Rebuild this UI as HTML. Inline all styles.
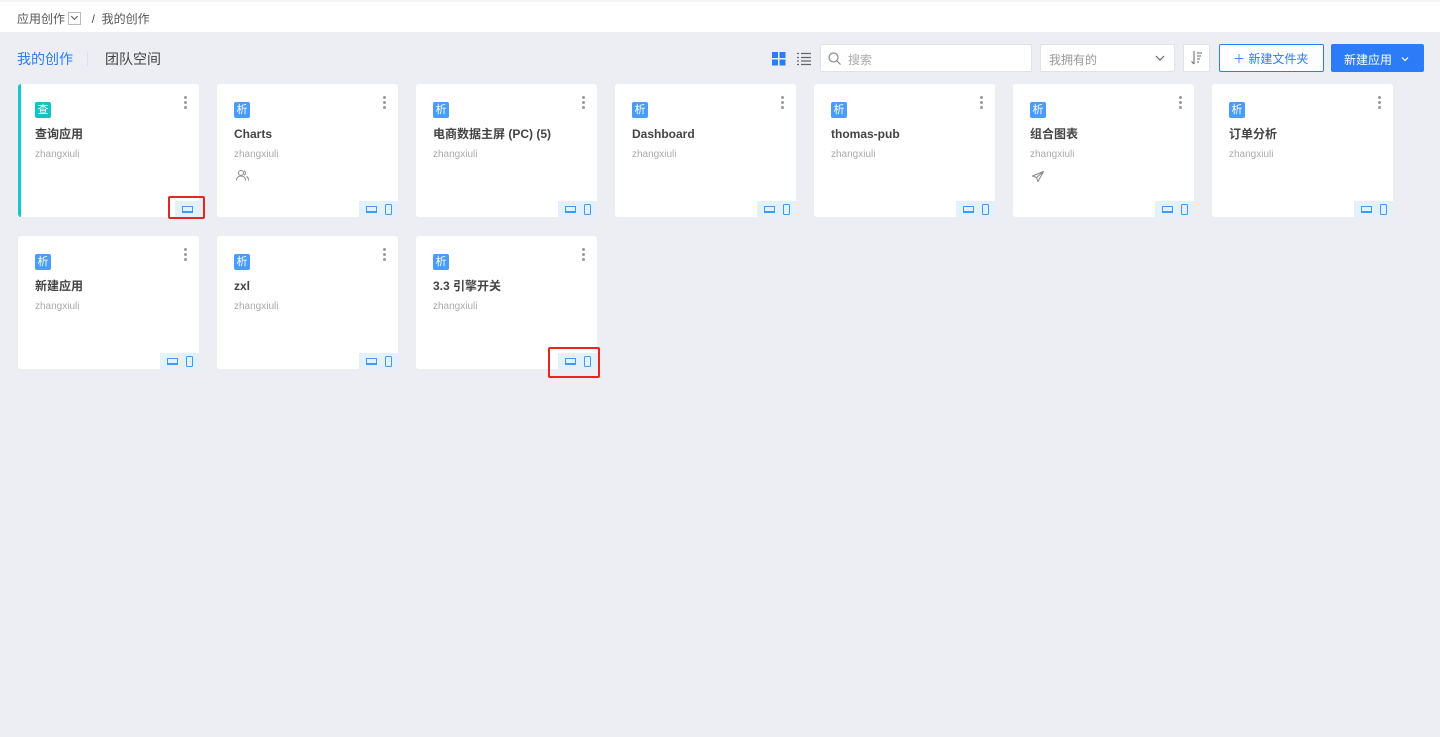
<!DOCTYPE html>
<html><head><meta charset="utf-8"><style>
*{margin:0;padding:0;box-sizing:border-box}
body{width:1440px;height:737px;background:#eceef3;font-family:"Liberation Sans","Noto Sans CJK SC",sans-serif;position:relative;overflow:hidden;color:#333}
.top{position:absolute;left:0;top:0;width:1440px;height:32px;background:#fff;border-top:2px solid #f3f4f6}
.bc{position:absolute;left:17px;top:8px;font-size:12px;color:#555}
.dd{display:inline-block;width:13px;height:13px;border:1px solid #bbb;vertical-align:-2px;margin:0 4px 0 3px;position:relative}
.dd:after{content:"";position:absolute;left:3px;top:1px;width:4px;height:4px;border-right:1px solid #555;border-bottom:1px solid #555;transform:rotate(45deg)}
.tab1{position:absolute;left:17px;top:49px;font-size:14px;color:#2b7cf6}
.tab2{position:absolute;left:105px;top:49px;font-size:14px;color:#444}
.sep{position:absolute;left:87px;top:52px;width:1px;height:14px;background:#dde}
.card{position:absolute;width:181px;height:133px;background:#fff;border-radius:3px}
.ic{position:absolute;left:17px;top:18px;width:16px;height:16px;border-radius:2px;background:#4a9cf6;color:#fff;font-size:11px;line-height:16px;text-align:center}
.ttl{position:absolute;left:17px;top:41px;font-size:12px;line-height:18px;font-weight:bold;color:#444}
.usr{position:absolute;left:17px;top:64px;font-size:10px;line-height:14px;color:#aaa}
.dots{position:absolute;right:12px;top:12px;width:3px}
.dots i{display:block;width:3px;height:3px;border-radius:50%;background:#999;margin-bottom:2px}
.bdg{position:absolute;right:0;bottom:0;height:16px;background:#e3f1fd;padding:0 6px 0 7px;display:flex;align-items:center;gap:8px}
.lap{width:11px;height:7px;border:1px solid #3d9af5;border-bottom-width:2px}
.ph{width:7px;height:11px;border:1px solid #3d9af5;border-radius:1.5px}
.red{position:absolute;border:2px solid #e8261f;border-radius:2px}
.box{position:absolute;top:44px;height:28px;background:#fff;border:1px solid #e0e2e8;border-radius:2px}
</style></head><body>
<div class="top"><div class="bc">应用创作<span class="dd"></span> &nbsp;/ &nbsp;我的创作</div></div>
<div class="tab1">我的创作</div><div class="sep"></div><div class="tab2">团队空间</div>

<svg style="position:absolute;left:772px;top:52px" width="14" height="14"><rect x="0" y="0" width="6" height="6" fill="#2b7cf6"/><rect x="7.5" y="0" width="6" height="6" fill="#2b7cf6"/><rect x="0" y="7.5" width="6" height="6" fill="#2b7cf6"/><rect x="7.5" y="7.5" width="6" height="6" fill="#2b7cf6"/></svg>
<svg style="position:absolute;left:797px;top:52px" width="14" height="14" stroke="#666" stroke-width="1.3"><path d="M0 1.5h2M4 1.5h10M0 5.5h2M4 5.5h10M0 9h2M4 9h10M0 12.5h2M4 12.5h10"/></svg>
<div class="box" style="left:820px;width:212px"><svg style="position:absolute;left:7px;top:7px" width="13" height="13" fill="none" stroke="#888" stroke-width="1.2"><circle cx="5.5" cy="5.5" r="4.5"/><path d="M9 9l3.5 3.5"/></svg><span style="position:absolute;left:27px;top:6px;font-size:12px;color:#aaa">搜索</span></div>
<div class="box" style="left:1040px;width:135px"><span style="position:absolute;left:8px;top:6px;font-size:12px;color:#999">我拥有的</span><svg style="position:absolute;right:9px;top:10px" width="10" height="7" fill="none" stroke="#666" stroke-width="1.2"><path d="M1 1l4 4 4-4"/></svg></div>
<div class="box" style="left:1183px;width:27px"><svg style="position:absolute;left:7px;top:6px" width="12" height="14" fill="none" stroke="#666" stroke-width="1"><path d="M3 0v13M0.5 10.5l2.5 2.5M6 2h5M6 5h4M6 8h3M6 11h2"/></svg></div>
<div class="box" style="left:1219px;width:105px;border-color:#2b7cf6"><span style="position:absolute;left:13px;top:5px;font-size:12px;color:#2b7cf6">＋ 新建文件夹</span></div>
<div class="box" style="left:1331px;width:93px;background:#2b7cf6;border-color:#2b7cf6"><span style="position:absolute;left:12px;top:6px;font-size:12px;color:#fff">新建应用</span><svg style="position:absolute;right:14px;top:12px" width="8" height="5" fill="none" stroke="#fff" stroke-width="1.2"><path d="M1 0.5l3 3 3-3"/></svg></div>

<div class="card" style="left:18px;top:84px;border-left:3px solid #12c8c8"><div class="ic" style="background:#12c3c3;left:14px">查</div><div class="dots"><i></i><i></i><i></i></div><div class="ttl" style="left:14px">查询应用</div><div class="usr" style="left:14px">zhangxiuli</div><div class="bdg"><div class="lap"></div></div></div>
<div class="card" style="left:217px;top:84px"><div class="ic">析</div><div class="dots"><i></i><i></i><i></i></div><div class="ttl">Charts</div><div class="usr">zhangxiuli</div><svg style="position:absolute;left:19px;top:86px" width="13" height="11" fill="none" stroke="#888" stroke-width="1"><circle cx="5" cy="3" r="2.5"/><path d="M0.5 10.5c0-3 2-4.5 4.5-4.5s4.5 1.5 4.5 4.5M8 0.8a2.5 2.5 0 010 4.5M10.5 6.5c1.5.7 2 2 2 4"/></svg><div class="bdg"><div class="lap"></div><div class="ph"></div></div></div>
<div class="card" style="left:416px;top:84px"><div class="ic">析</div><div class="dots"><i></i><i></i><i></i></div><div class="ttl">电商数据主屏 (PC) (5)</div><div class="usr">zhangxiuli</div><div class="bdg"><div class="lap"></div><div class="ph"></div></div></div>
<div class="card" style="left:615px;top:84px"><div class="ic">析</div><div class="dots"><i></i><i></i><i></i></div><div class="ttl">Dashboard</div><div class="usr">zhangxiuli</div><div class="bdg"><div class="lap"></div><div class="ph"></div></div></div>
<div class="card" style="left:814px;top:84px"><div class="ic">析</div><div class="dots"><i></i><i></i><i></i></div><div class="ttl">thomas-pub</div><div class="usr">zhangxiuli</div><div class="bdg"><div class="lap"></div><div class="ph"></div></div></div>
<div class="card" style="left:1013px;top:84px"><div class="ic">析</div><div class="dots"><i></i><i></i><i></i></div><div class="ttl">组合图表</div><div class="usr">zhangxiuli</div><svg style="position:absolute;left:19px;top:87px" width="12" height="11" fill="none" stroke="#888" stroke-width="1"><path d="M11.5 0.5L0.5 5l4 1.5 1.5 4z M4.5 6.5L11.5 0.5"/></svg><div class="bdg"><div class="lap"></div><div class="ph"></div></div></div>
<div class="card" style="left:1212px;top:84px"><div class="ic">析</div><div class="dots"><i></i><i></i><i></i></div><div class="ttl">订单分析</div><div class="usr">zhangxiuli</div><div class="bdg"><div class="lap"></div><div class="ph"></div></div></div>

<div class="card" style="left:18px;top:236px"><div class="ic">析</div><div class="dots"><i></i><i></i><i></i></div><div class="ttl">新建应用</div><div class="usr">zhangxiuli</div><div class="bdg"><div class="lap"></div><div class="ph"></div></div></div>
<div class="card" style="left:217px;top:236px"><div class="ic">析</div><div class="dots"><i></i><i></i><i></i></div><div class="ttl">zxl</div><div class="usr">zhangxiuli</div><div class="bdg"><div class="lap"></div><div class="ph"></div></div></div>
<div class="card" style="left:416px;top:236px"><div class="ic">析</div><div class="dots"><i></i><i></i><i></i></div><div class="ttl">3.3 引擎开关</div><div class="usr">zhangxiuli</div><div class="bdg"><div class="lap"></div><div class="ph"></div></div></div>

<div class="red" style="left:168px;top:196px;width:37px;height:23px"></div>
<div class="red" style="left:548px;top:347px;width:52px;height:31px"></div>
</body></html>
